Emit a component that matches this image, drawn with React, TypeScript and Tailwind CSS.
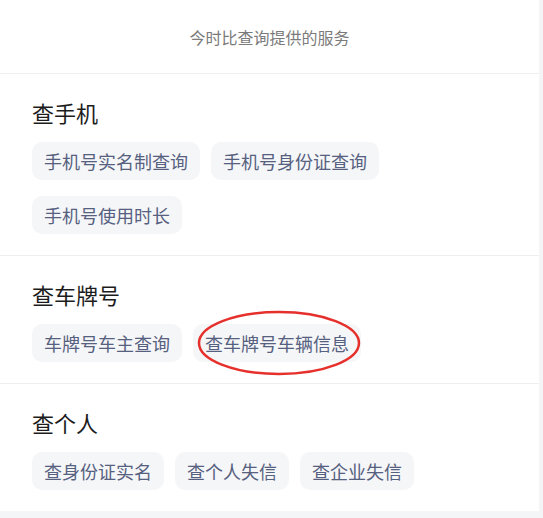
const sections = [
  {
    title: "查手机",
    items: ["手机号实名制查询", "手机号身份证查询", "手机号使用时长"],
  },
  {
    title: "查车牌号",
    items: ["车牌号车主查询", "查车牌号车辆信息"],
  },
  {
    title: "查个人",
    items: ["查身份证实名", "查个人失信", "查企业失信"],
  },
];

const font = { fontFamily: '"Noto Sans CJK SC", "Noto Sans", sans-serif' };

export default function App() {
  return (
    <div className="min-h-[518px] w-[543px] bg-[#f4f5f7]" style={font}>
      <div className="w-[539px] bg-white">
        <div className="flex h-[74px] items-center justify-center border-b border-[#eeeeee] text-[16px] text-[#7b7b7b]">
          今时比查询提供的服务
        </div>

        {sections.map((section, idx) => (
          <div
            key={idx}
            className="border-b border-[#eeeeee] px-[32px] pt-[24px] pb-[21px] last:border-b-0"
          >
            <h3 className="text-[22px] leading-[28px] font-normal text-[#1c1c1c]">
              {section.title}
            </h3>
            <div className="mt-[16px] flex flex-wrap gap-x-[11px] gap-y-[16px]">
              {section.items.map((item) => (
                <div
                  key={item}
                  className="relative flex h-[38px] items-center rounded-[10px] bg-[#f5f6f8] px-[12px] text-[18px] text-[#56607f]"
                >
                  {item}
                  {item === "查车牌号车辆信息" && (
                    <svg
                      className="pointer-events-none absolute left-[4px] top-[-14px]"
                      width="164"
                      height="66"
                      viewBox="0 0 164 66"
                    >
                      <ellipse
                        cx="82"
                        cy="33"
                        rx="80"
                        ry="31"
                        fill="none"
                        stroke="#e5302c"
                        strokeWidth="2.5"
                      />
                    </svg>
                  )}
                </div>
              ))}
            </div>
          </div>
        ))}
      </div>
    </div>
  );
}
